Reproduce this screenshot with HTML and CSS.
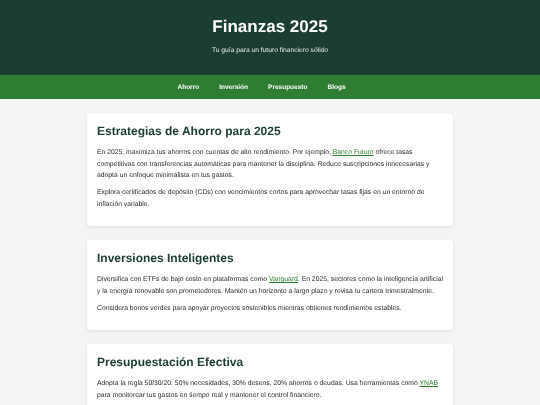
FILE: index.html
```
<!DOCTYPE html>
<html lang="es">
<head>
<meta charset="utf-8">
<title>Finanzas 2025</title>
<link rel="stylesheet" href="styles.css">
</head>
<body>
<header class="site-header">
  <h1 class="site-title">Finanzas 2025</h1>
  <p class="site-tagline">Tu guía para un futuro financiero sólido</p>
</header>
<nav class="site-nav">
  <a href="#ahorro">Ahorro</a>
  <a href="#inversion">Inversión</a>
  <a href="#presupuesto">Presupuesto</a>
  <a href="#blogs">Blogs</a>
</nav>
<main class="content">
  <section class="card" id="ahorro">
    <h2>Estrategias de Ahorro para 2025</h2>
    <p>En 2025, maximiza tus ahorros con cuentas de alto rendimiento. Por ejemplo, <a href="#">Banco Futuro</a> ofrece tasas competitivas con transferencias automáticas para mantener la disciplina. Reduce suscripciones innecesarias y adopta un enfoque minimalista en tus gastos.</p>
    <p>Explora certificados de depósito (CDs) con vencimientos cortos para aprovechar tasas fijas en un entorno de inflación variable.</p>
  </section>
  <section class="card" id="inversion">
    <h2>Inversiones Inteligentes</h2>
    <p>Diversifica con ETFs de bajo costo en plataformas como <a href="#">Vanguard</a>. En 2025, sectores como la inteligencia artificial y la energía renovable son prometedores. Mantén un horizonte a largo plazo y revisa tu cartera trimestralmente.</p>
    <p>Considera bonos verdes para apoyar proyectos sostenibles mientras obtienes rendimientos estables.</p>
  </section>
  <section class="card" id="presupuesto">
    <h2>Presupuestación Efectiva</h2>
    <p>Adopta la regla 50/30/20: 50% necesidades, 30% deseos, 20% ahorros o deudas. Usa herramientas como <a href="#">YNAB</a> para monitorear tus gastos en tiempo real y mantener el control financiero.</p>
  </section>
</main>
</body>
</html>
```
FILE: styles.css
```
* { box-sizing: border-box; }
html, body { margin: 0; padding: 0; }
body {
  background: #f4f4f4;
  font-family: "Liberation Sans", Arial, sans-serif;
  color: #2b2b2b;
  text-rendering: geometricPrecision;
}
.site-header {
  background: #1b3d33;
  color: #fff;
  text-align: center;
  height: 75px;
  padding-top: 17px;
  will-change: transform;
}
.site-title {
  margin: 0;
  font-size: 17px;
  line-height: 20px;
  font-weight: bold;
}
.site-tagline {
  margin: 9px 0 0;
  font-size: 6.7px;
  line-height: 9px;
  color: #e6ece9;
}
.site-nav {
  background: #2e7d32;
  height: 24px;
  display: flex;
  justify-content: center;
  align-items: center;
  gap: 20px;
  padding-right: 17px;
  will-change: transform;
}
.site-nav a {
  color: #fff;
  font-weight: bold;
  font-size: 6.5px;
  text-decoration: none;
}
.content {
  width: 366px;
  margin: 14px auto 0;
  display: flex;
  flex-direction: column;
  gap: 14px;
}
.card {
  background: #fff;
  border-radius: 4px;
  box-shadow: 0 1px 3px rgba(0,0,0,0.1);
  padding: 10px;
  will-change: transform;
}
.card h2 {
  margin: 0 0 8px;
  color: #1b3d33;
  font-size: 12px;
  line-height: 16px;
}
.card p {
  margin: 0 0 5.75px;
  font-size: 6.8px;
  line-height: 11.5px;
}
.card a { color: #2e7d32; }
```
